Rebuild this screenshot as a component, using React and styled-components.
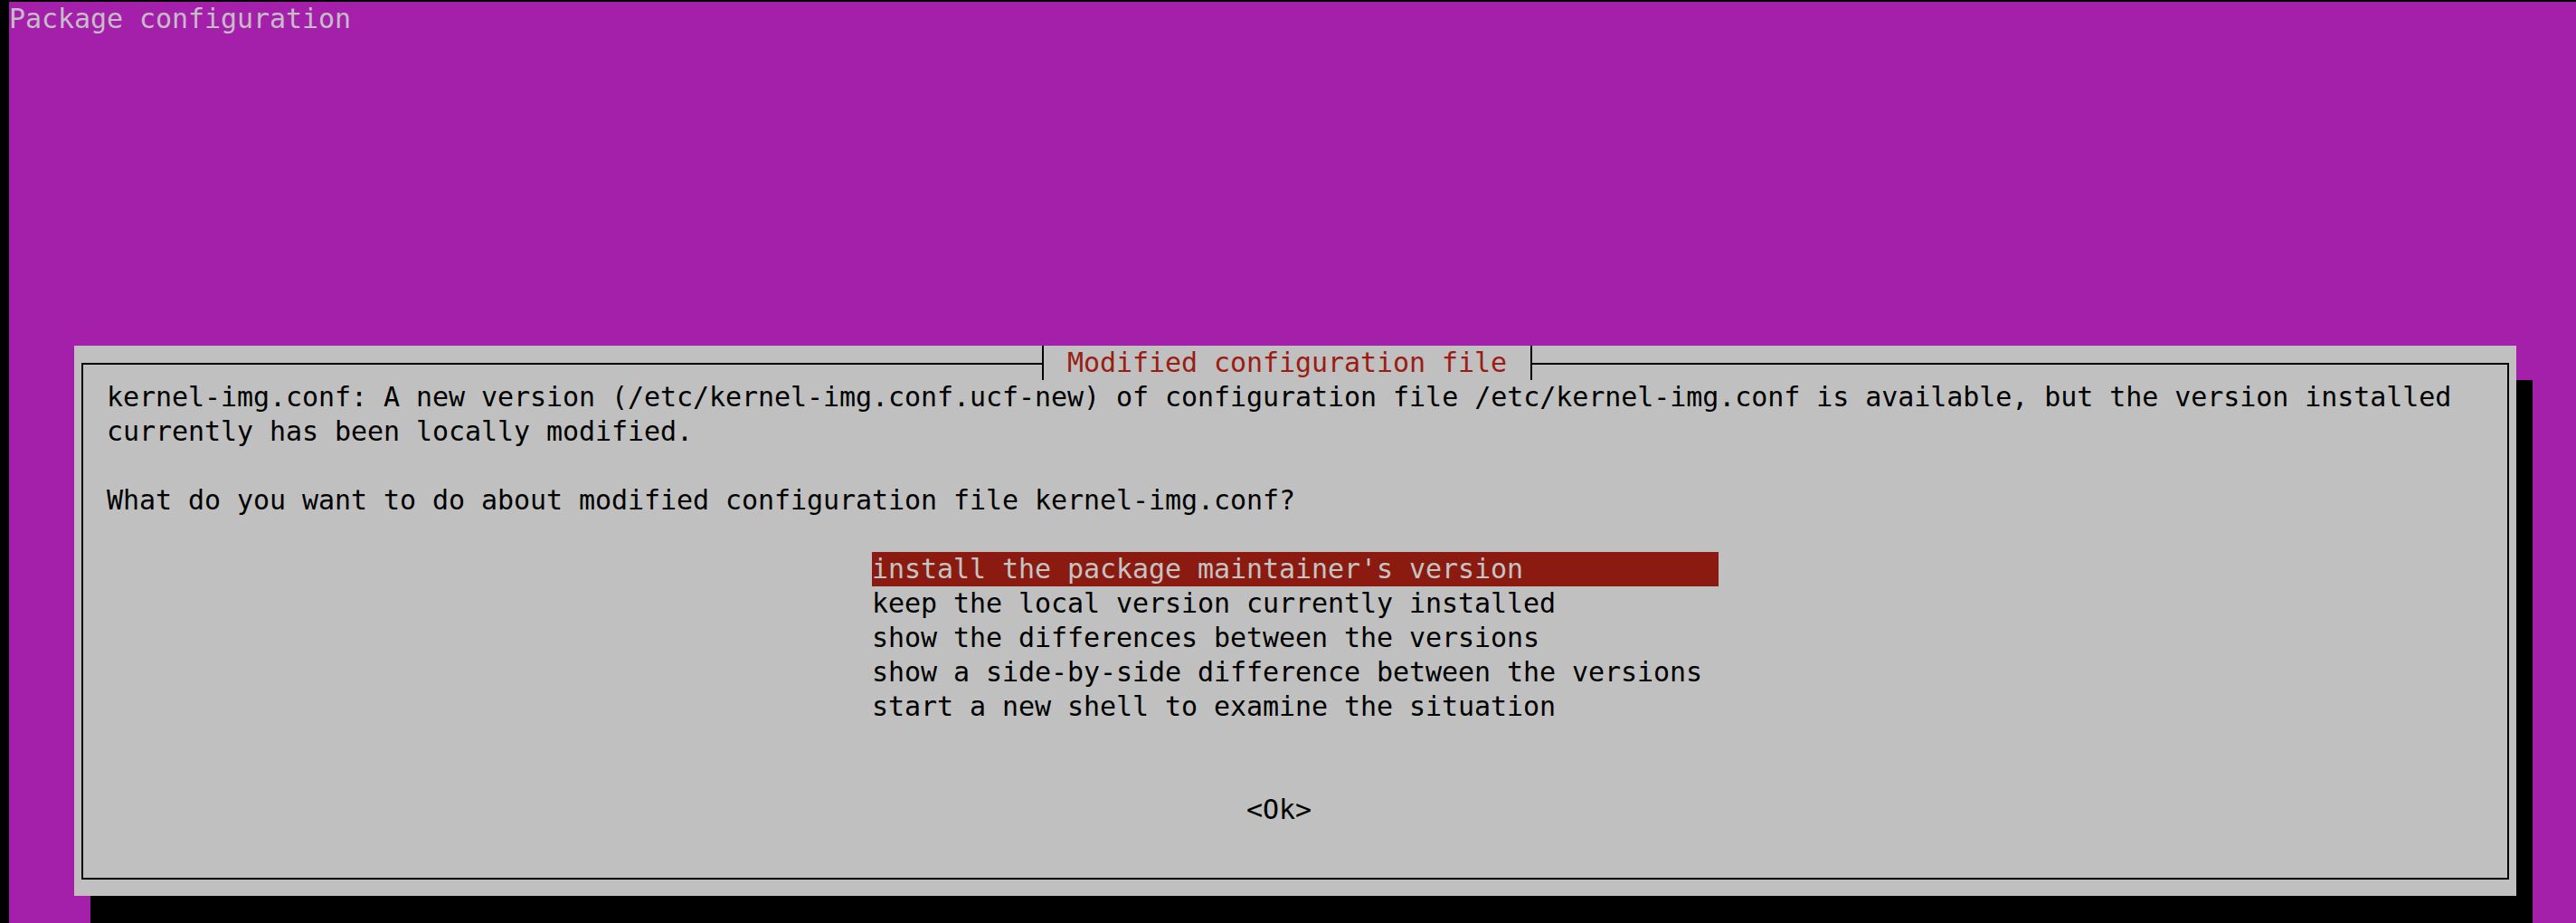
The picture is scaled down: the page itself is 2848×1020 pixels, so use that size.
import styled, { createGlobalStyle } from "styled-components"

// terminal cell grid: 18px wide, 38px tall
const CW = 18;
const RH = 38;

const GlobalStyle = createGlobalStyle`
    html, body {
        margin: 0;
        padding: 0;
        background: #000;
    }
`;

const Window = styled.div`
    width: 2848px;
    height: 1020px;
    box-sizing: border-box;
    padding: 2px 0 0 10px;
    background: #000;
    overflow: hidden;
`;

const Terminal = styled.div`
    height: 100%;
    background: #a520aa;
    font-family: "DejaVu Sans Mono", "Liberation Mono", monospace;
    font-size: 30px;
    letter-spacing: -0.06px;
    line-height: ${RH}px;
    color: #000;
    display: flex;
    flex-direction: column;
    align-items: flex-start;
`;

const Backtitle = styled.div`
    height: ${RH}px;
    color: #c6bcc7;
    white-space: pre;
`;

const Dialog = styled.div`
    margin-top: ${RH * 9}px;
    margin-left: ${CW * 4}px;
    width: ${CW * 150}px;
    height: ${RH * 16}px;
    box-sizing: border-box;
    padding: 0 8px 18px 8px;
    background: #c0c0c0;
    box-shadow: ${CW}px ${RH}px 0 0 #000;
    display: flex;
    flex-direction: column;
`;

const TitleBar = styled.div`
    height: ${RH}px;
    flex-shrink: 0;
    display: flex;
`;

const Edge = styled.div`
    align-self: flex-end;
    height: 19px;
    box-sizing: border-box;
    border-top: 2px solid #000;
    ${p => p.$side === "left"
        ? `border-left: 2px solid #000; flex: 0 0 ${CW * 59 - 8}px;`
        : `border-right: 2px solid #000; flex: 1;`}
`;

const line = "linear-gradient(#000, #000)";

const Tee = styled.span`
    width: ${CW}px;
    height: ${RH}px;
    flex-shrink: 0;
    background:
        ${line} no-repeat 8px 0 / 2px 100%,
        ${line} no-repeat ${p => (p.$dir === "left" ? "0" : "9px")} 19px / 9px 2px;
`;

const Title = styled.span`
    padding: 0 ${CW}px;
    color: #9a1c12;
    white-space: pre;
`;

const Body = styled.div`
    flex: 1;
    border: 2px solid #000;
    border-top: none;
    padding: 0 24px 0 26px;
    display: flex;
    flex-direction: column;
    align-items: flex-start;
`;

const Message = styled.div`
    white-space: pre;
`;

const Question = styled.div`
    margin-top: ${RH}px;
    white-space: pre;
`;

const Menu = styled.div`
    margin-top: ${RH}px;
    margin-left: ${CW * 47}px;
    width: ${CW * 52}px;
    display: flex;
    flex-direction: column;
`;

const MenuItem = styled.div`
    height: ${RH}px;
    white-space: pre;
    background: ${p => (p.$selected ? "#8b1b10" : "transparent")};
    color: ${p => (p.$selected ? "#c4c4c4" : "#000")};
`;

const OkButton = styled.div`
    margin-top: ${RH * 2}px;
    margin-left: ${CW * 70}px;
    white-space: pre;
`;

const choices = [
    "install the package maintainer's version",
    "keep the local version currently installed",
    "show the differences between the versions",
    "show a side-by-side difference between the versions",
    "start a new shell to examine the situation",
];

const App = () => {
    return (
        <>
            <GlobalStyle />
            <Window>
                <Terminal>
                    <Backtitle>Package configuration</Backtitle>
                    <Dialog>
                        <TitleBar>
                            <Edge $side="left" />
                            <Tee $dir="left" />
                            <Title>Modified configuration file</Title>
                            <Tee $dir="right" />
                            <Edge $side="right" />
                        </TitleBar>
                        <Body>
                            <Message>
                                {"kernel-img.conf: A new version (/etc/kernel-img.conf.ucf-new) of configuration file /etc/kernel-img.conf is available, but the version installed\ncurrently has been locally modified."}
                            </Message>
                            <Question>What do you want to do about modified configuration file kernel-img.conf?</Question>
                            <Menu>
                                {choices.map((c, i) => (
                                    <MenuItem key={c} $selected={i === 0}>{c}</MenuItem>
                                ))}
                            </Menu>
                            <OkButton>{"<Ok>"}</OkButton>
                        </Body>
                    </Dialog>
                </Terminal>
            </Window>
        </>
    )
}

export default App
